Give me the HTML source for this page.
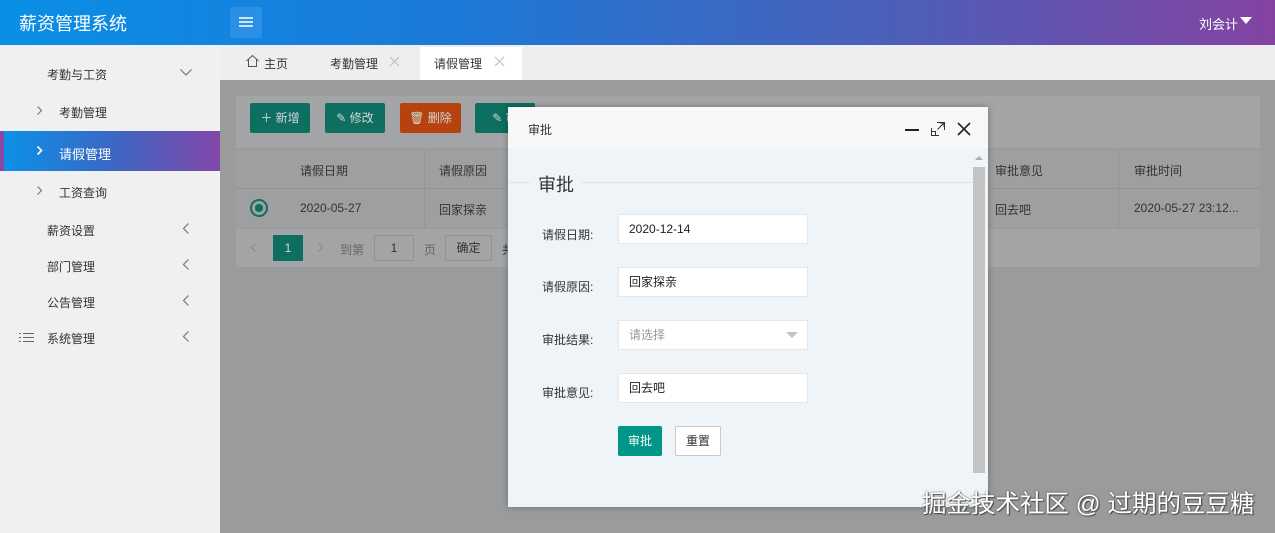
<!DOCTYPE html>
<html><head><meta charset="utf-8"><style>
*{margin:0;padding:0;box-sizing:border-box}
body{width:1275px;height:533px;overflow:hidden;position:relative;font-family:"Liberation Sans","Noto Sans CJK SC",sans-serif;font-size:12px;color:#333;background:#eeeef0}
.abs{position:absolute}
.hdr{left:0;top:0;width:1275px;height:45px;background:linear-gradient(90deg,#0a8fe6 0%,#1b7ad8 35%,#4c5fb8 70%,#8443a2 100%)}
.side{left:0;top:45px;width:220px;height:488px;background:#f0f0f0}
.mi{position:absolute;left:47px;font-size:12px;color:#333}
.content{left:220px;top:80px;width:1055px;height:453px;background:#9a9b9d}
.btn{position:absolute;top:103px;height:30px;color:#cfd8d6;font-size:12px;line-height:30px;text-align:center;border-radius:2px}
.dlg{left:508px;top:107px;width:480px;height:400px;background:#eef4f7;box-shadow:0 0 6px rgba(0,0,0,.3)}
.inp{position:absolute;left:110px;width:190px;height:30px;background:#fff;border:1px solid #e6e6e6;line-height:28px;padding-left:10px;font-size:12px;color:#222}
.lbl{position:absolute;left:34px;font-size:12px;color:#333}
svg{position:absolute;overflow:visible}
</style></head><body>
<div class="abs hdr"></div>
<div class="abs" style="left:19px;top:10px;color:#fff;font-size:18px">薪资管理系统</div>
<div class="abs" style="left:230px;top:7px;width:32px;height:31px;background:#2a90e6;border-radius:2px"></div>
<svg style="left:239px;top:17px" width="14" height="10"><path d="M0 1H14M0 5H14M0 9H14" stroke="#fff" stroke-width="1.5"/></svg>
<div class="abs" style="left:1199px;top:14px;color:#fff;font-size:13px">刘会计</div>
<div class="abs" style="left:1240px;top:17px;width:0;height:0;border-left:6px solid transparent;border-right:6px solid transparent;border-top:7px solid #fff"></div>

<div class="abs side"></div>
<div class="mi" style="top:66px">考勤与工资</div>
<svg style="left:180px;top:69px" width="12" height="7"><path d="M0.5 0.5L6 6L11.5 0.5" fill="none" stroke="#777" stroke-width="1.2"/></svg>
<svg style="left:37px;top:106px" width="5" height="9"><path d="M0.5 0.5L4.5 4.5L0.5 8.5" fill="none" stroke="#777" stroke-width="1.2"/></svg>
<div class="mi" style="left:59px;top:104px">考勤管理</div>
<div class="abs" style="left:0;top:131px;width:220px;height:40px;background:linear-gradient(90deg,#0a92e8,#3a68c4 50%,#8247a8)"></div>
<div class="abs" style="left:0;top:131px;width:4px;height:40px;background:#8a48a4"></div>
<svg style="left:37px;top:146px" width="5" height="9"><path d="M0.5 0.5L4.5 4.5L0.5 8.5" fill="none" stroke="#fff" stroke-width="1.6"/></svg>
<div class="mi" style="left:59px;top:144px;color:#fff;font-size:13px">请假管理</div>
<svg style="left:37px;top:186px" width="5" height="9"><path d="M0.5 0.5L4.5 4.5L0.5 8.5" fill="none" stroke="#777" stroke-width="1.2"/></svg>
<div class="mi" style="left:59px;top:184px">工资查询</div>
<div class="mi" style="top:222px">薪资设置</div>
<svg style="left:183px;top:223px" width="6" height="11"><path d="M5.5 0.5L0.5 5.5L5.5 10.5" fill="none" stroke="#777" stroke-width="1.2"/></svg>
<div class="mi" style="top:258px">部门管理</div>
<svg style="left:183px;top:259px" width="6" height="11"><path d="M5.5 0.5L0.5 5.5L5.5 10.5" fill="none" stroke="#777" stroke-width="1.2"/></svg>
<div class="mi" style="top:294px">公告管理</div>
<svg style="left:183px;top:295px" width="6" height="11"><path d="M5.5 0.5L0.5 5.5L5.5 10.5" fill="none" stroke="#777" stroke-width="1.2"/></svg>
<svg style="left:19px;top:333px" width="15" height="9"><path d="M0 0.5H2M4 0.5H15M0 4.5H2M4 4.5H15M0 8.5H2M4 8.5H15" stroke="#666" stroke-width="1"/></svg>
<div class="mi" style="top:330px">系统管理</div>
<svg style="left:183px;top:331px" width="6" height="11"><path d="M5.5 0.5L0.5 5.5L5.5 10.5" fill="none" stroke="#777" stroke-width="1.2"/></svg>

<div class="abs" style="left:220px;top:45px;width:1055px;height:35px;background:#eeeef0"></div>
<svg style="left:246px;top:55px" width="13" height="12"><path d="M0.5 6L6.5 0.5L12.5 6M2.5 4.5V11.5H10.5V4.5" fill="none" stroke="#555" stroke-width="1"/></svg>
<div class="abs" style="left:264px;top:55px;color:#333">主页</div>
<div class="abs" style="left:330px;top:55px;color:#333">考勤管理</div>
<svg style="left:390px;top:57px" width="9" height="9"><path d="M0 0L9 9M9 0L0 9" stroke="#bbb" stroke-width="1"/></svg>
<div class="abs" style="left:420px;top:47px;width:102px;height:35px;background:#fff"></div>
<div class="abs" style="left:434px;top:55px;color:#333">请假管理</div>
<svg style="left:495px;top:57px" width="9" height="9"><path d="M0 0L9 9M9 0L0 9" stroke="#bbb" stroke-width="1"/></svg>

<div class="abs content"></div>
<div class="abs" style="left:236px;top:96px;width:1024px;height:52px;background:#a3a4a5"></div>
<div class="btn" style="left:250px;width:60px;background:#0e6e60">＋ 新增</div>
<div class="btn" style="left:325px;width:60px;background:#0e6e60">✎ 修改</div>
<div class="btn" style="left:400px;width:61px;background:#b7420e">🗑 删除</div>
<div class="btn" style="left:475px;width:60px;background:#0e6e60">✎ 审</div>
<div class="abs" style="left:236px;top:150px;width:1024px;height:78px;background:#9e9fa0"></div>
<div class="abs" style="left:236px;top:188px;width:1024px;height:1px;background:#939495"></div>
<div class="abs" style="left:424px;top:150px;width:1px;height:78px;background:#939495"></div>
<div class="abs" style="left:1118px;top:150px;width:1px;height:78px;background:#939495"></div>
<div class="abs" style="left:300px;top:162px;color:#333">请假日期</div>
<div class="abs" style="left:439px;top:162px;color:#333">请假原因</div>
<div class="abs" style="left:995px;top:162px;color:#333">审批意见</div>
<div class="abs" style="left:1134px;top:162px;color:#333">审批时间</div>
<div class="abs" style="left:250px;top:199px;width:18px;height:18px;border:2px solid #0e6e60;border-radius:50%"></div>
<div class="abs" style="left:255px;top:204px;width:8px;height:8px;background:#0e6e60;border-radius:50%"></div>
<div class="abs" style="left:300px;top:201px;color:#333">2020-05-27</div>
<div class="abs" style="left:439px;top:201px;color:#333">回家探亲</div>
<div class="abs" style="left:995px;top:201px;color:#333">回去吧</div>
<div class="abs" style="left:1134px;top:201px;color:#333">2020-05-27 23:12...</div>
<div class="abs" style="left:236px;top:229px;width:1024px;height:38px;background:#a3a4a5"></div>
<svg style="left:251px;top:243px" width="5" height="9"><path d="M4.5 0.5L0.5 4.5L4.5 8.5" fill="none" stroke="#888" stroke-width="1"/></svg>
<div class="abs" style="left:273px;top:235px;width:30px;height:26px;background:#0e6e60;color:#cfd8d6;text-align:center;line-height:26px">1</div>
<svg style="left:318px;top:243px" width="5" height="9"><path d="M0.5 0.5L4.5 4.5L0.5 8.5" fill="none" stroke="#888" stroke-width="1"/></svg>
<div class="abs" style="left:340px;top:241px;color:#666">到第</div>
<div class="abs" style="left:374px;top:235px;width:40px;height:26px;border:1px solid #909192;line-height:24px;text-align:center;color:#333;background:#a3a4a5">1</div>
<div class="abs" style="left:424px;top:241px;color:#666">页</div>
<div class="abs" style="left:445px;top:235px;width:47px;height:26px;border:1px solid #909192;line-height:24px;text-align:center;color:#333;background:#a3a4a5">确定</div>
<div class="abs" style="left:502px;top:241px;color:#333">共</div>

<div class="abs dlg">
 <div style="position:absolute;left:0;top:0;width:480px;height:42px;background:#f8f8f8"></div>
 <div style="position:absolute;left:20px;top:14px;color:#333">审批</div>
 <svg style="left:397px;top:22px" width="14" height="2"><path d="M0 1H14" stroke="#222" stroke-width="2"/></svg>
 <svg style="left:423px;top:15px" width="14" height="14"><path d="M0.5 6V13.5H8M6 0.5H13.5V8M6.5 7.5L13 1M9 1H13V5M0.5 9.5H4.5V13.5" fill="none" stroke="#333" stroke-width="1"/></svg>
 <svg style="left:450px;top:16px" width="12" height="12"><path d="M0 0L12 12M12 0L0 12" stroke="#222" stroke-width="1.6"/></svg>
 <div style="position:absolute;left:0;top:75px;width:465px;height:1px;background:#dde3e6"></div>
 <div style="position:absolute;left:22px;top:64px;padding:0 8px;background:#eef4f7;font-size:18px;color:#333">审批</div>
 <div style="position:absolute;left:465px;top:60px;width:12px;height:306px;background:#c3c3c3"></div>
 <div style="position:absolute;left:467px;top:49px;width:0;height:0;border-left:4px solid transparent;border-right:4px solid transparent;border-bottom:4px solid #aaa"></div>
 <div class="lbl" style="top:119px">请假日期:</div><div class="inp" style="top:107px">2020-12-14</div>
 <div class="lbl" style="top:171px">请假原因:</div><div class="inp" style="top:160px">回家探亲</div>
 <div class="lbl" style="top:224px">审批结果:</div><div class="inp" style="top:213px;color:#999">请选择</div>
 <div style="position:absolute;left:278px;top:225px;width:0;height:0;border-left:6px solid transparent;border-right:6px solid transparent;border-top:6px solid #c2c2c2"></div>
 <div class="lbl" style="top:277px">审批意见:</div><div class="inp" style="top:266px">回去吧</div>
 <div style="position:absolute;left:110px;top:319px;width:44px;height:30px;background:#009688;color:#fff;text-align:center;line-height:30px;border-radius:2px">审批</div>
 <div style="position:absolute;left:167px;top:319px;width:46px;height:30px;background:#fff;border:1px solid #c9c9c9;color:#333;text-align:center;line-height:28px;border-radius:2px">重置</div>
</div>
<div class="abs" style="left:922px;top:485px;font-size:24.5px;color:#fff;white-space:nowrap;text-shadow:0 0 2px #555,1px 1px 1px #444">掘金技术社区 @ 过期的豆豆糖</div>
</body></html>
